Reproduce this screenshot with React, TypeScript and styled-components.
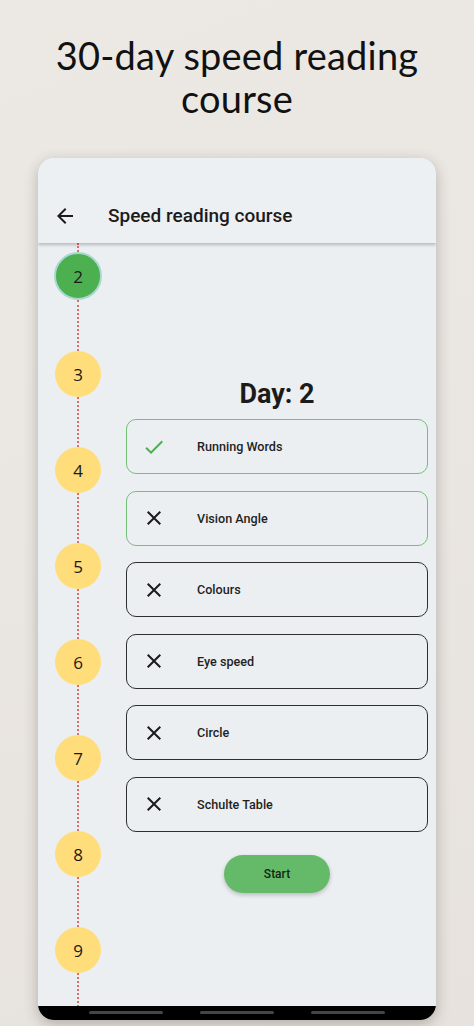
import React from 'react';
import styled, { createGlobalStyle } from 'styled-components';

const GlobalStyle = createGlobalStyle`
  html, body {
    margin: 0;
    padding: 0;
  }
  body {
    width: 474px;
    height: 1026px;
    overflow: hidden;
    background: linear-gradient(160deg, #ece9e5 0%, #e7e2dd 100%);
    font-family: Roboto, "Noto Sans", sans-serif;
  }
`;

const DAYS = [2, 3, 4, 5, 6, 7, 8, 9];

const EXERCISES = [
    { name: 'Running Words', done: true, active: true },
    { name: 'Vision Angle', done: false, active: true },
    { name: 'Colours', done: false, active: false },
    { name: 'Eye speed', done: false, active: false },
    { name: 'Circle', done: false, active: false },
    { name: 'Schulte Table', done: false, active: false },
];

const CheckIcon = () => (
    <svg width="24" height="24" viewBox="0 0 24 24" fill="#4caf50">
        <path d="M9 16.17L4.83 12l-1.42 1.41L9 19 21 7l-1.41-1.41z" />
    </svg>
);

const CloseIcon = () => (
    <svg width="24" height="24" viewBox="0 0 24 24" fill="#1b1b1b">
        <path d="M19 6.41L17.59 5 12 10.59 6.41 5 5 6.41 10.59 12 5 17.59 6.41 19 12 13.41 17.59 19 19 17.59 13.41 12z" />
    </svg>
);

const BackIcon = () => (
    <svg width="24" height="24" viewBox="0 0 24 24" fill="#1b1b1b">
        <path d="M20 11H7.83l5.59-5.59L12 4l-8 8 8 8 1.41-1.41L7.83 13H20v-2z" />
    </svg>
);

export default function App() {
    return (
        <>
            <GlobalStyle />
            <Page>
                <Headline>
                    30-day speed reading
                    <br />
                    course
                </Headline>

                <Phone>
                    <AppBar>
                        <BackIcon />
                        <AppTitle>Speed reading course</AppTitle>
                    </AppBar>

                    <Body>
                        <Timeline>
                            <Connector $height={9} />
                            {DAYS.map((day, i) => (
                                <React.Fragment key={day}>
                                    <DayCircle $current={i === 0}>{day}</DayCircle>
                                    <Connector $height={i === 0 ? 51 : 50} />
                                </React.Fragment>
                            ))}
                        </Timeline>

                        <Content>
                            <DayTitle>Day: 2</DayTitle>
                            <ExerciseList>
                                {EXERCISES.map((ex) => (
                                    <ExerciseCard key={ex.name} $active={ex.active}>
                                        <IconSlot>{ex.done ? <CheckIcon /> : <CloseIcon />}</IconSlot>
                                        <ExerciseName>{ex.name}</ExerciseName>
                                    </ExerciseCard>
                                ))}
                            </ExerciseList>
                            <StartButton>Start</StartButton>
                        </Content>
                    </Body>

                    <NavBar>
                        <NavPill />
                        <NavPill />
                        <NavPill />
                    </NavBar>
                </Phone>
            </Page>
        </>
    );
}

const Page = styled.div`
    width: 474px;
    height: 1026px;
    display: flex;
    flex-direction: column;
    align-items: center;
`;

const Headline = styled.h1`
    margin: 34px 0 0;
    text-align: center;
    font: normal normal 400 38px/43px Lato, "Open Sans", sans-serif;
    color: #111;
    letter-spacing: 0.2px;
`;

const Phone = styled.div`
    margin-top: 38px;
    width: 398px;
    height: 862px;
    border-radius: 16px;
    background: #eceff2;
    box-shadow: 0 4px 14px rgba(60, 50, 40, 0.3);
    overflow: hidden;
    display: flex;
    flex-direction: column;
`;

const AppBar = styled.div`
    height: 85px;
    box-sizing: border-box;
    padding: 30px 0 0 15px;
    display: flex;
    align-items: center;
    gap: 31px;
    background: #edf0f3;
    box-shadow: 0 2px 3px rgba(0, 0, 0, 0.22);
    position: relative;
    z-index: 1;
    flex-shrink: 0;
`;

const AppTitle = styled.div`
    font: normal normal 500 19px Roboto, sans-serif;
    color: #1b1b1b;
`;

const Body = styled.div`
    flex: 1;
    display: flex;
    overflow: hidden;
`;

const Timeline = styled.div`
    width: 80px;
    flex-shrink: 0;
    display: flex;
    flex-direction: column;
    align-items: center;
`;

const Connector = styled.div<{ $height: number }>`
    height: ${(p) => p.$height}px;
    flex-shrink: 0;
    border-left: 2px dotted #e06c6c;
`;

const DayCircle = styled.div<{ $current?: boolean }>`
    width: ${(p) => (p.$current ? 48 : 46)}px;
    height: ${(p) => (p.$current ? 48 : 46)}px;
    flex-shrink: 0;
    box-sizing: border-box;
    border-radius: 50%;
    display: flex;
    align-items: center;
    justify-content: center;
    background: ${(p) => (p.$current ? '#4caf50' : '#ffdd7a')};
    border: ${(p) => (p.$current ? '2px solid #a8d8cf' : 'none')};
    font: normal normal 400 17px "Open Sans", "Noto Sans", sans-serif;
    color: #1a1a1a;
`;

const Content = styled.div`
    flex: 1;
    padding: 136px 8px 0 8px;
    display: flex;
    flex-direction: column;
    align-items: center;
`;

const DayTitle = styled.div`
    font: normal normal 700 27px/30px Roboto, sans-serif;
    color: #1b1b1b;
`;

const ExerciseList = styled.div`
    margin-top: 10px;
    width: 100%;
    display: flex;
    flex-direction: column;
    gap: 16.6px;
`;

const ExerciseCard = styled.div<{ $active?: boolean }>`
    height: 55px;
    box-sizing: border-box;
    border-radius: 10px;
    border: 1.3px solid ${(p) => (p.$active ? '#74c078' : '#2e2e2e')};
    display: flex;
    align-items: center;
    padding-left: 15px;
    gap: 31px;
`;

const IconSlot = styled.div`
    width: 24px;
    height: 24px;
    display: flex;
`;

const ExerciseName = styled.div`
    font: normal normal 500 12.6px Roboto, sans-serif;
    color: #1f1f1f;
`;

const StartButton = styled.button`
    margin-top: 23px;
    width: 106px;
    height: 38px;
    border: none;
    border-radius: 19px;
    background: #64ba69;
    box-shadow: 0 2px 4px rgba(0, 0, 0, 0.22);
    font: normal normal 500 12px Roboto, sans-serif;
    color: #142514;
`;

const NavBar = styled.div`
    height: 14px;
    flex-shrink: 0;
    background: #000;
    display: flex;
    justify-content: center;
    align-items: center;
    gap: 37px;
    padding-bottom: 1px;
    box-sizing: border-box;
`;

const NavPill = styled.div`
    width: 74px;
    height: 3px;
    border-radius: 2px;
    background: #454545;
`;
